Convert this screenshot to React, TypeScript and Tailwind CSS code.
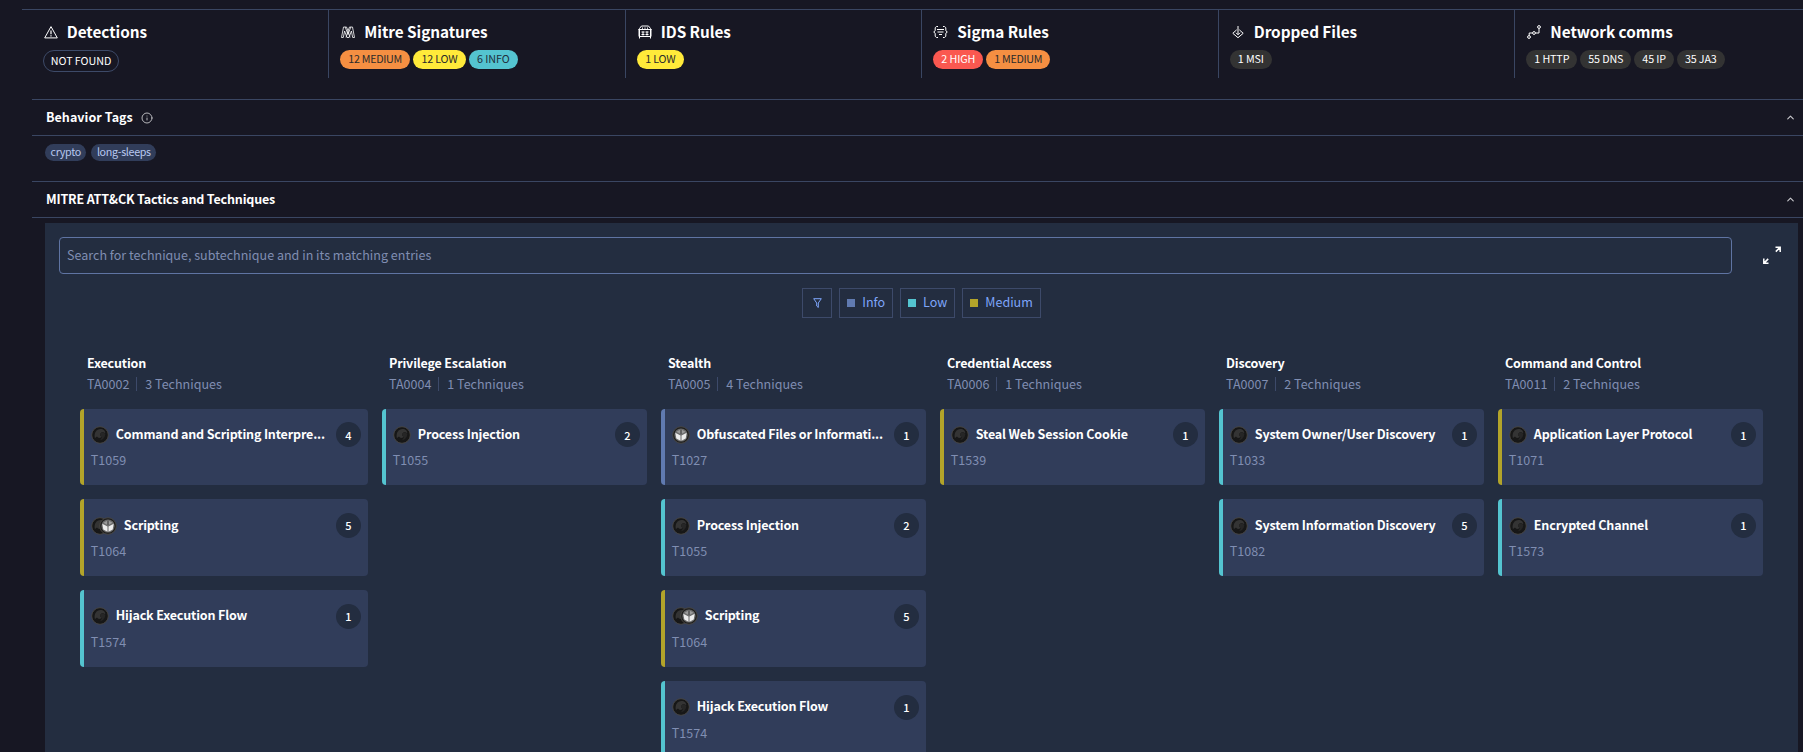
import { ChevronUp, Info } from "lucide-react";
import type { ReactNode } from "react";

type Tone = "medium" | "low" | "info" | "high" | "neutral" | "outline";
type Level = "info" | "low" | "medium";
type Source = "swirl" | "cube";

type Summary = {
  title: string;
  icon: ReactNode;
  badges: { label: string; tone: Tone }[];
};

type Technique = {
  name: string;
  id: string;
  count: number;
  level: Level;
  sources?: Source[];
};

type Tactic = {
  name: string;
  id: string;
  techniques: Technique[];
};

const TONES: Record<Tone, string> = {
  medium: "bg-[#f58f42] text-[#2b2b2b] h-[19px] px-2 tracking-[-0.3px]",
  low: "bg-[#ffea3a] text-[#2b2b2b] h-[19px] px-[8.5px] tracking-[-0.2px]",
  info: "bg-[#54c4d0] text-[#22303c] h-[19px] px-2 tracking-[-0.05px]",
  high: "bg-[#fa5850] text-white h-[19px] px-2 tracking-[-0.1px]",
  neutral: "bg-[#333333] text-white h-[19px] px-2 tracking-[-0.14px]",
  outline: "border border-[#3d4a68] text-white h-[22px] px-[7px] tracking-[-0.05px]",
};

const LEVELS: Record<Level, { border: string; bg: string }> = {
  info: { border: "border-[#607ab0]", bg: "bg-[#607ab0]" },
  low: { border: "border-[#54c4d0]", bg: "bg-[#54c4d0]" },
  medium: { border: "border-[#b3a42a]", bg: "bg-[#b3a42a]" },
};

const SUMMARY: Summary[] = [
  {
    title: "Detections",
    icon: <WarningIcon />,
    badges: [{ label: "NOT FOUND", tone: "outline" }],
  },
  {
    title: "Mitre Signatures",
    icon: <MitreIcon />,
    badges: [
      { label: "12 MEDIUM", tone: "medium" },
      { label: "12 LOW", tone: "low" },
      { label: "6 INFO", tone: "info" },
    ],
  },
  {
    title: "IDS Rules",
    icon: <IdsIcon />,
    badges: [{ label: "1 LOW", tone: "low" }],
  },
  {
    title: "Sigma Rules",
    icon: <SigmaIcon />,
    badges: [
      { label: "2 HIGH", tone: "high" },
      { label: "1 MEDIUM", tone: "medium" },
    ],
  },
  {
    title: "Dropped Files",
    icon: <DroppedIcon />,
    badges: [{ label: "1 MSI", tone: "neutral" }],
  },
  {
    title: "Network comms",
    icon: <NetworkIcon />,
    badges: [
      { label: "1 HTTP", tone: "neutral" },
      { label: "55 DNS", tone: "neutral" },
      { label: "45 IP", tone: "neutral" },
      { label: "35 JA3", tone: "neutral" },
    ],
  },
];

const TACTICS: Tactic[] = [
  {
    name: "Execution",
    id: "TA0002",
    techniques: [
      { name: "Command and Scripting Interpre...", id: "T1059", count: 4, level: "medium" },
      { name: "Scripting", id: "T1064", count: 5, level: "medium", sources: ["swirl", "cube"] },
      { name: "Hijack Execution Flow", id: "T1574", count: 1, level: "low" },
    ],
  },
  {
    name: "Privilege Escalation",
    id: "TA0004",
    techniques: [{ name: "Process Injection", id: "T1055", count: 2, level: "low" }],
  },
  {
    name: "Stealth",
    id: "TA0005",
    techniques: [
      { name: "Obfuscated Files or Informati...", id: "T1027", count: 1, level: "info", sources: ["cube"] },
      { name: "Process Injection", id: "T1055", count: 2, level: "low" },
      { name: "Scripting", id: "T1064", count: 5, level: "medium", sources: ["swirl", "cube"] },
      { name: "Hijack Execution Flow", id: "T1574", count: 1, level: "low" },
    ],
  },
  {
    name: "Credential Access",
    id: "TA0006",
    techniques: [{ name: "Steal Web Session Cookie", id: "T1539", count: 1, level: "medium" }],
  },
  {
    name: "Discovery",
    id: "TA0007",
    techniques: [
      { name: "System Owner/User Discovery", id: "T1033", count: 1, level: "low" },
      { name: "System Information Discovery", id: "T1082", count: 5, level: "low" },
    ],
  },
  {
    name: "Command and Control",
    id: "TA0011",
    techniques: [
      { name: "Application Layer Protocol", id: "T1071", count: 1, level: "medium" },
      { name: "Encrypted Channel", id: "T1573", count: 1, level: "low" },
    ],
  },
];

function WarningIcon() {
  return (
    <svg width="14" height="14" viewBox="0 0 14 14" fill="none" stroke="currentColor">
      <path d="M7 1.6 13.3 12.9H.7z" />
      <path d="M7 5.5v3.800M7 10.3v1.2" strokeWidth="1.2" />
    </svg>
  );
}

function MitreIcon() {
  return (
    <svg width="14" height="14" viewBox="0 0 14 14" fill="none" stroke="currentColor" strokeWidth="0.8">
      <path d="M.5 12.5 2.5 2h1.700L7 9.5 9.800 2h1.700l2 10.5h-1.800L10.400 6 8 12.5H6L3.600 6l-1.300 6.500z" />
      <path d="M4.2 2h1.300L7 6l1.500-4h1.300M5 12.5 7 6l2 6.500" />
    </svg>
  );
}

function IdsIcon() {
  return (
    <svg width="14" height="14" viewBox="0 0 14 14" fill="none" stroke="currentColor">
      <path d="M1.5 13.5V3.5L3.500 1h7l2 2.500v10M.5 4.500h13M1.5 11.500h11M4.500 3.800V2.500M7 3.800V2.500M9.500 3.800V2.500" />
      <path d="M1 4v7.500M13 4v7.500M5 6.500v4M9 6.500v4M3.500 7h3M7.500 7h3M3.500 9.500h3M7.500 9.500h3" />
    </svg>
  );
}

function SigmaIcon() {
  return (
    <svg width="15" height="14" viewBox="0 0 15 14" fill="none" stroke="currentColor" className="-ml-px">
      <path d="M5 1.500H3.500L2.200 2.700v3L.7 7l1.500 1.300v3L3.500 12.500H5M10 1.500h1.500l1.300 1.200v3L14.300 7l-1.500 1.300v3l-1.300 1.200H10" />
      <path d="M4 4.500h7M4.500 7h6M6 9.500h3" />
    </svg>
  );
}

function DroppedIcon() {
  return (
    <svg width="14" height="14" viewBox="0 0 14 14" fill="none" stroke="currentColor">
      <path d="M7 1v8.500M5 7.800l2 2 2-2" />
      <path d="M5.700 4.800 1.800 8.300 7 12.700l5.200-4.400-3.900-3.500" />
    </svg>
  );
}

function NetworkIcon() {
  return (
    <svg width="14" height="14" viewBox="0 0 14 14" fill="none" stroke="currentColor">
      <circle cx="2" cy="12" r="1.400" />
      <circle cx="7" cy="8" r="1.400" />
      <circle cx="12" cy="2" r="1.400" />
      <path d="M2.200 10.600V8h3.400M8.400 8H12V3.400" />
    </svg>
  );
}

function SourceIcon({ kind }: { kind: Source }) {
  if (kind === "cube") {
    return (
      <svg width="18" height="18" viewBox="0 0 18 18" className="relative shrink-0">
        <circle cx="9" cy="9" r="8.300" fill="#1f1f1f" stroke="#4a4743" strokeWidth="0.9" />
        <circle cx="9" cy="9" r="6.600" fill="#6b6b6b" />
        <path d="M9 3.200 13.500 5.700 9 8.200 4.500 5.700z" fill="#9a9a9a" />
        <path d="M3.300 6.800 8.500 9.600v5.200L4.300 12.400z" fill="#ececec" />
        <path d="M14.700 6.800 9.500 9.600v5.200l4.200-2.400z" fill="#ececec" />
        <path d="M9 3.500V8" stroke="#2a2a2a" />
      </svg>
    );
  }
  return (
    <svg width="18" height="18" viewBox="0 0 18 18" className="shrink-0">
      <circle cx="9" cy="9" r="8.300" fill="#171717" stroke="#4a4743" strokeWidth="0.9" />
      <path d="M4 12.500C2.500 7 5.500 3 9.500 3c3 0 5 2 4.800 4.500C13 6 10.500 5.800 9.500 7.500 8.500 9.500 9.800 10.500 11 10c-1 2.500-4 2.500-5 .5-1 .5-1.500 1-2 2z" fill="#343434" />
      <path d="M9.500 7.500C10.500 6 13 6 14.300 8c0 3-2.300 5.800-5.300 6.300 1-1.300 2-2.500 2-4.300-1.200.5-2.500-.5-1.500-2.500z" fill="#262626" />
    </svg>
  );
}

function SectionHeader({ title, info }: { title: string; info?: boolean }) {
  return (
    <div className="flex h-[37px] items-center border-y border-[#3a4662] pl-3.5 pr-[7px]">
      <h2 className={`pb-px text-[12.53px] font-bold leading-none text-white ${info ? "tracking-[0.04px]" : "tracking-[-0.17px]"}`}>{title}</h2>
      {info && <Info size={12} strokeWidth={1.8} className="ml-2 text-[#c8c8cc]" />}
      <ChevronUp size={11} strokeWidth={2.5} className="ml-auto text-[#c8c8cc]" />
    </div>
  );
}

function TechniqueCard({ technique }: { technique: Technique }) {
  const sources = technique.sources ?? ["swirl"];
  return (
    <div className={`h-[76.7px] rounded-[4px] border-l-[4px] bg-[#313d5a] pl-[6.8px] pr-[7px] pt-[13.9px] ${LEVELS[technique.level].border}`}>
      <div className="flex h-[25px] items-center">
        <div className="flex shrink-0 -space-x-2.5">
          {sources.map((kind) => (
            <SourceIcon key={kind} kind={kind} />
          ))}
        </div>
        <span className="ml-[7px] whitespace-nowrap pb-px text-[12.53px] font-bold tracking-[-0.16px] text-white">{technique.name}</span>
        <span className="ml-auto flex size-[25px] shrink-0 items-center justify-center rounded-full bg-[#232d40] text-[11px] font-medium text-white">
          {technique.count}
        </span>
      </div>
      <div className="mt-[3px] text-[12.53px] leading-[20px] text-[#808eb2]">{technique.id}</div>
    </div>
  );
}

export default function App() {
  return (
    <div className="h-[752px] w-full overflow-hidden bg-[#171723] pt-[9px] font-['Noto_Sans_CJK_SC',sans-serif]">
      <div className="ml-[22px] border-t border-[#3a4662] pl-[9.8px]">
        <div className="grid w-[1779px] grid-cols-6">
          {SUMMARY.map((item, i) => (
            <div key={item.title} className={`h-[68px] pl-[11px] pt-[11px] ${i > 0 ? "border-l border-[#3a4662]" : ""}`}>
              <div className="flex h-[22px] items-center text-white">
                <span className="flex w-6 pl-px">{item.icon}</span>
                <span className="text-[15.3px] font-bold leading-none tracking-[-0.04px]">{item.title}</span>
              </div>
              <div className="mt-[7px] flex gap-[3px]">
                {item.badges.map((b) => (
                  <span key={b.label} className={`flex items-center rounded-full text-[10.74px] leading-none ${TONES[b.tone]}`}>
                    {b.label}
                  </span>
                ))}
              </div>
            </div>
          ))}
        </div>
      </div>

      <section className="ml-8 mt-[21px]">
        <SectionHeader title="Behavior Tags" info />
        <div className="flex h-[45px] gap-[5px] pl-[13px] pt-2">
          {["crypto", "long-sleeps"].map((tag) => (
            <span key={tag} className="flex h-[17px] items-center rounded-full bg-[#313d5a] px-[5.5px] pb-px text-[10.74px] leading-none tracking-[-0.33px] text-[#b8c8f0]">
              {tag}
            </span>
          ))}
        </div>
      </section>

      <section className="ml-8">
        <SectionHeader title="MITRE ATT&CK Tactics and Techniques" />
        <div className="ml-[13px] mr-[5px] mt-[5px] h-[600px] bg-[#232d40] px-3.5 pt-3.5">
          <div className="flex items-center">
            <input
              placeholder="Search for technique, subtechnique and in its matching entries"
              className="h-[37px] w-[1673px] rounded-[4px] border border-[#5f74a3] bg-transparent px-[7px] pb-0.5 text-[12.53px] tracking-[0.01px] placeholder:text-[#808eb2]"
            />
            <svg width="18" height="19" viewBox="0 0 18 19" fill="none" stroke="white" strokeWidth="1.5" className="ml-[31px]">
              <path d="M12.500 1.200h4.700V6M17 1.400l-4.200 4.200M5.500 17.300H.8v-4.800M1 17.100l4.200-4.200" />
            </svg>
          </div>

          <div className="mt-3.5 flex justify-center gap-[7px]">
            <button className="flex size-[30px] items-center justify-center border border-[#3d4a6a] text-[#7ea5fa]">
              <svg width="9" height="10" viewBox="0 0 9 10" fill="none" stroke="currentColor">
                <path d="M.7.7h7.600L5.300 5v4.500L3.700 8V5z" />
              </svg>
            </button>
            {(["info", "low", "medium"] as Level[]).map((level) => (
              <button key={level} className="flex h-[30px] items-center gap-[7px] border border-[#3d4a6a] px-[7px] text-[12.53px] capitalize text-[#7ea5fa]">
                <span className={`size-2 ${LEVELS[level].bg}`} />
                <span className="pb-px">{level}</span>
              </button>
            ))}
          </div>

          <div className="mt-[34px] flex gap-3.5 px-[21px]">
            {TACTICS.map((tactic, i) => (
              <div key={tactic.id} className={i === 0 ? "w-[288px]" : "w-[265px]"}>
                <div className="h-[56.6px] pl-[7px]">
                  <div className="text-[12.53px] font-bold leading-[22px] tracking-[-0.17px] text-white">{tactic.name}</div>
                  <div className="flex items-center text-[12.53px] leading-[20px] text-[#808eb2]">
                    {tactic.id}
                    <span className="ml-[7px] mr-2 h-3.5 w-px bg-[#3d4a6a]" />
                    {tactic.techniques.length} Techniques
                  </div>
                </div>
                <div className="flex flex-col gap-3.5">
                  {tactic.techniques.map((t) => (
                    <TechniqueCard key={t.id} technique={t} />
                  ))}
                </div>
              </div>
            ))}
          </div>
        </div>
      </section>
    </div>
  );
}
